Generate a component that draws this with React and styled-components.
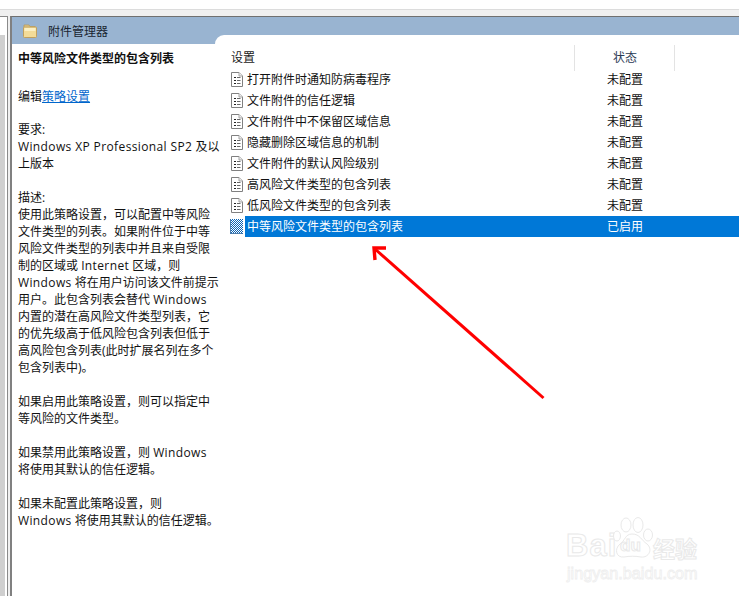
import React from 'react'
import styled, { createGlobalStyle } from 'styled-components'

const GlobalStyle = createGlobalStyle`
  html, body { margin: 0; padding: 0; background: #fff; }
  body {
    font-family: "Open Sans", "Noto Sans CJK SC", sans-serif;
    font-size: 12px;
    color: #111;
  }
`

const settings = [
  '打开附件时通知防病毒程序',
  '文件附件的信任逻辑',
  '文件附件中不保留区域信息',
  '隐藏删除区域信息的机制',
  '文件附件的默认风险级别',
  '高风险文件类型的包含列表',
  '低风险文件类型的包含列表',
]

const description = [
  {
    lines: ['要求:', 'Windows XP Professional SP2 及以', '上版本'],
  },
  {
    lines: [
      '描述:',
      '使用此策略设置，可以配置中等风险',
      '文件类型的列表。如果附件位于中等',
      '风险文件类型的列表中并且来自受限',
      '制的区域或 Internet 区域，则',
      'Windows 将在用户访问该文件前提示',
      '用户。此包含列表会替代 Windows',
      '内置的潜在高风险文件类型列表，它',
      '的优先级高于低风险包含列表但低于',
      '高风险包含列表(此时扩展名列在多个',
      '包含列表中)。',
    ],
  },
  { lines: ['如果启用此策略设置，则可以指定中', '等风险的文件类型。'] },
  { lines: ['如果禁用此策略设置，则 Windows', '将使用其默认的信任逻辑。'] },
  { lines: ['如果未配置此策略设置，则', 'Windows 将使用其默认的信任逻辑。'] },
]

const Page = styled.div`
  position: relative;
  width: 739px;
  height: 596px;
  overflow: hidden;
  background: #fff;
`

const TopGap = styled.div`
  height: 9px;
  border-bottom: 1px solid #dcdcdc;
`

const Workspace = styled.div`
  display: flex;
  height: 586px;
  background: #f0f0f0;
  padding-top: 6px;
  box-sizing: border-box;
`

const LeftRail = styled.div`
  width: 8px;
  margin-right: 2px;
  border-top: 1px solid #8a8a8a;
  border-right: 1px solid #8a8a8a;
  box-sizing: border-box;
  background: #fff;
  padding: 18px 2px 0 0;
`

const RailFill = styled.div`
  height: 100%;
  background: #cfcfcf;
`

const Pane = styled.div`
  flex: 1;
  display: flex;
  flex-direction: column;
  border-top: 1px solid #707070;
  border-left: 2px solid #808080;
  background: #fff;
  min-width: 0;
`

const TitleBand = styled.div`
  display: flex;
  align-items: center;
  gap: 11px;
  height: 27px;
  padding: 0 0 0 11px;
  background: #99b4d1;
  color: #1a2430;
  line-height: 27px;
`

const TitleText = styled.span`
  margin-top: 2px;
`

const PaneBody = styled.div`
  flex: 1;
  display: flex;
  min-height: 0;
`

const Extended = styled.div`
  position: relative;
  z-index: 1;
  width: 203px;
  padding: 6px 0 0 6px;
  box-sizing: border-box;
  line-height: 17px;
  white-space: nowrap;
`

const Heading = styled.div`
  font-weight: 700;
  margin-bottom: 21px;
`

const EditLine = styled.div`
  margin-bottom: 16px;
`

const PolicyLink = styled.a`
  color: #0066cc;
  text-decoration: underline;
`

const Paragraph = styled.p`
  margin: 0 0 17px;
`

const Line = styled.span`
  display: block;
`

const Latin = styled.span`
  letter-spacing: 0.38px;
`

const ListPanel = styled.div`
  flex: 1;
  margin-top: -9px;
  padding-top: 10px;
  background: #fff;
  border-top-left-radius: 9px;
  min-width: 0;
`

const HeaderRow = styled.div`
  display: grid;
  grid-template-columns: 360px 100px 1fr;
  height: 24px;
`

const HeaderCell = styled.div`
  line-height: 26px;
  padding-left: ${p => p.$pad}px;
  border-right: ${p => (p.$divider ? '1px solid #e3e3e3' : 'none')};
  color: ${p => p.$color || '#222'};
`

const Rows = styled.div`
  display: flex;
  flex-direction: column;
`

const Row = styled.div`
  display: flex;
  height: 21px;
  align-items: center;
  padding-left: 15px;
`

const RowIcon = styled.svg`
  flex: none;
  width: 13px;
  height: 15px;
  margin-right: 2px;
`

const RowBody = styled.div`
  flex: 1;
  display: flex;
  height: 21px;
  line-height: 21px;
  padding-left: 2px;
  background: ${p => (p.$selected ? '#0078d7' : 'transparent')};
  color: ${p => (p.$selected ? '#fff' : '#111')};
`

const RowName = styled.span`
  width: 360px;
  white-space: nowrap;
`

const Arrow = styled.svg`
  position: absolute;
  left: 360px;
  top: 230px;
`

const Watermark = styled.div`
  position: absolute;
  left: 566px;
  top: 516px;
  width: 135px;
  height: 68px;
  color: #fff;
  -webkit-text-stroke: 1px #e9e9e9;
  font-family: "Liberation Sans", sans-serif;
`

const MarkBai = styled.span`
  position: absolute;
  left: 0;
  top: 14px;
  font-size: 31px;
  line-height: 32px;
  font-weight: 700;
  letter-spacing: 1px;
`

const MarkPaw = styled.svg`
  position: absolute;
  left: 46px;
  top: 0;
`

const MarkDu = styled.span`
  position: absolute;
  left: 54px;
  top: 20px;
  font-size: 17px;
  line-height: 20px;
  font-weight: 700;
`

const MarkJingyan = styled.span`
  position: absolute;
  left: 87px;
  top: 18px;
  font-size: 22px;
  line-height: 26px;
  font-weight: 700;
  font-family: "Noto Sans CJK SC", sans-serif;
`

const MarkDomain = styled.span`
  position: absolute;
  left: 1px;
  top: 47px;
  font-size: 16.2px;
  line-height: 20px;
  white-space: nowrap;
  -webkit-text-stroke: 0.8px #eeeeee;
`

const FolderIcon = () => (
  <svg width="14" height="14" viewBox="0 0 14 14">
    <path d="M1 3.5 L1 1 L6 1 L7 2.5 L12 2.5 L12 4.5 Z" fill="#e3c987" stroke="#b59a5c" strokeWidth="0.8" />
    <rect x="0.5" y="3" width="13" height="10.5" rx="1" fill="#f3dc98" stroke="#c0a05e" />
    <rect x="1.5" y="4" width="11" height="3" fill="#fbf0c4" />
  </svg>
)

const PolicyIcon = () => (
  <RowIcon viewBox="0 0 13 15">
    <path d="M1.5 .5 H9 L12.5 4 V14.5 H1.5 Z" fill="#fff" stroke="#808080" />
    <path d="M9 .5 V4 H12.5" fill="#eee" stroke="#a5a5a5" />
    <path d="M4 5.5 h2 M4 8.5 h2 M4 11.5 h2" stroke="#222" />
    <path d="M7 5.5 h3.5 M7 8.5 h3.5 M7 11.5 h3.5" stroke="#666" />
  </RowIcon>
)

const SelectedIcon = () => (
  <RowIcon viewBox="0 0 13 15">
    <defs>
      <pattern id="dither" width="2" height="2" patternUnits="userSpaceOnUse">
        <rect width="2" height="2" fill="#fff" />
        <rect width="1" height="1" fill="#0a63b5" />
        <rect x="1" y="1" width="1" height="1" fill="#0a63b5" />
      </pattern>
    </defs>
    <path d="M0 0 H13 V15 H0 Z" fill="url(#dither)" />
    <path d="M.5 .5 V14.5 H12.5" fill="none" stroke="#4f7fae" />
  </RowIcon>
)

// Latin runs sit on wider metrics in the original, CJK stays on its 12px grid
const renderLine = line =>
  line.split(/([A-Za-z0-9][A-Za-z0-9 ]*[A-Za-z0-9])/).map((part, i) =>
    i % 2 ? <Latin key={i}>{part}</Latin> : part
  )

export default function App() {
  return (
    <>
      <GlobalStyle />
      <Page>
        <TopGap />
        <Workspace>
          <LeftRail>
            <RailFill />
          </LeftRail>
          <Pane>
            <TitleBand>
              <FolderIcon />
              <TitleText>附件管理器</TitleText>
            </TitleBand>
            <PaneBody>
              <Extended>
                <Heading>中等风险文件类型的包含列表</Heading>
                <EditLine>
                  编辑<PolicyLink>策略设置</PolicyLink>
                </EditLine>
                {description.map((para, i) => (
                  <Paragraph key={i}>
                    {para.lines.map(line => (
                      <Line key={line}>{renderLine(line)}</Line>
                    ))}
                  </Paragraph>
                ))}
              </Extended>
              <ListPanel>
                <HeaderRow>
                  <HeaderCell $pad={16} $divider>设置</HeaderCell>
                  <HeaderCell $pad={38} $divider $color="#2b3a55">状态</HeaderCell>
                  <HeaderCell />
                </HeaderRow>
                <Rows>
                  {settings.map(name => (
                    <Row key={name}>
                      <PolicyIcon />
                      <RowBody>
                        <RowName>{name}</RowName>
                        <span>未配置</span>
                      </RowBody>
                    </Row>
                  ))}
                  <Row>
                    <SelectedIcon />
                    <RowBody $selected>
                      <RowName>中等风险文件类型的包含列表</RowName>
                      <span>已启用</span>
                    </RowBody>
                  </Row>
                </Rows>
              </ListPanel>
            </PaneBody>
          </Pane>
        </Workspace>

        <Arrow width="200" height="180" viewBox="360 230 200 180">
          <path d="M543.5 398 L375 249" stroke="#ff0000" strokeWidth="3" fill="none" />
          <path d="M386 248 L374 248 L375 260" stroke="#ff0000" strokeWidth="3.4" fill="none" />
        </Arrow>

        <Watermark>
          <MarkBai>Bai</MarkBai>
          <MarkPaw width="42" height="44" viewBox="0 0 42 44">
            <g fill="#fff" stroke="#e9e9e9" strokeWidth="1">
              <ellipse cx="14" cy="9" rx="5" ry="7" />
              <ellipse cx="26" cy="9" rx="5" ry="7.5" />
              <ellipse cx="36" cy="19" rx="4.5" ry="6" />
              <ellipse cx="5" cy="20" rx="3.5" ry="5" />
              <path d="M20 18 C28 18 29 24 35 28 C41 33 37 42 29 41 C24 40 17 40 12 41 C4 42 2 33 8 28 C13 25 13 18 20 18 Z" />
            </g>
          </MarkPaw>
          <MarkDu>du</MarkDu>
          <MarkJingyan>经验</MarkJingyan>
          <MarkDomain>jingyan.baidu.com</MarkDomain>
        </Watermark>
      </Page>
    </>
  )
}
